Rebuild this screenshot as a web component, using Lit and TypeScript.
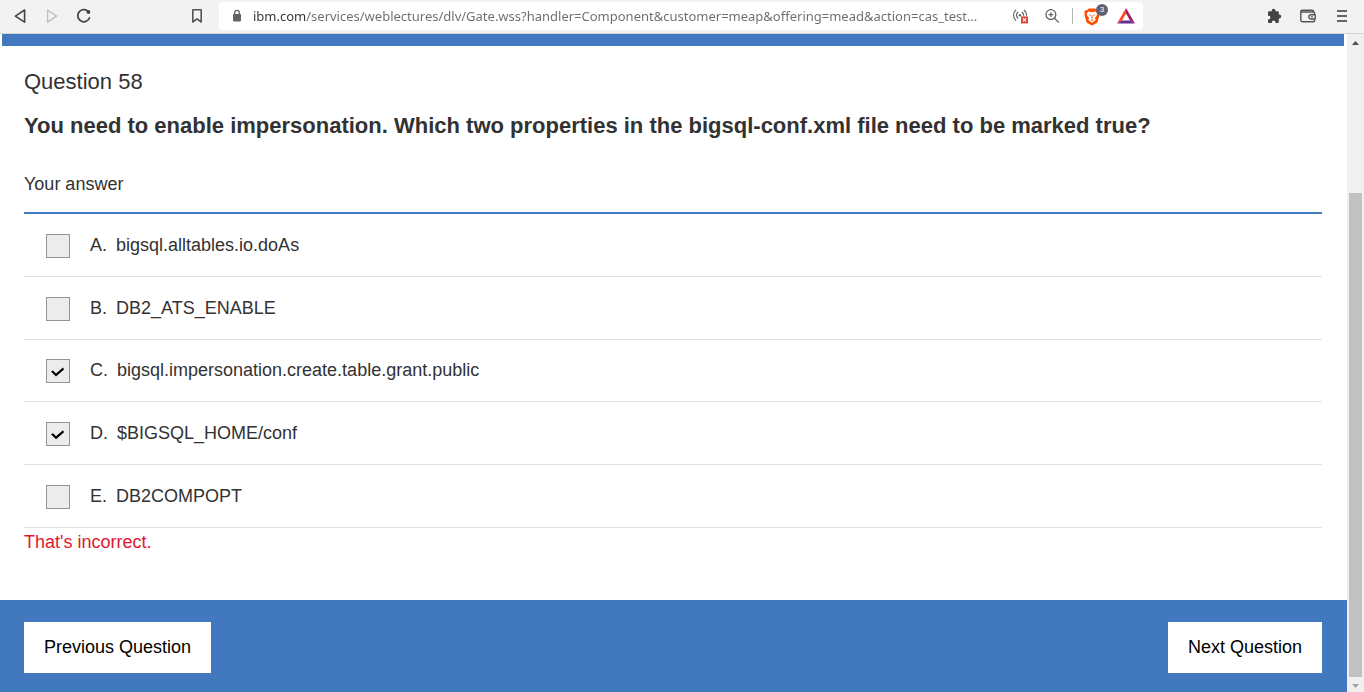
import { LitElement, html, css } from "lit";
import { customElement, state } from "lit/decorators.js";

interface Option {
  letter: string;
  text: string;
  checked: boolean;
}

@customElement("browser-bar")
class BrowserBar extends LitElement {
  static styles = css`
    :host {
      display: block;
      background: #f2f2f2;
      border-bottom: 1px solid #d5d5d5;
    }
    .bar {
      display: flex;
      align-items: center;
      height: 33px;
      box-sizing: border-box;
      padding: 0 12px 2px;
    }
    button {
      display: block;
      flex: none;
      border: 0;
      padding: 0;
      margin: 0;
      background: none;
      width: 16px;
      height: 16px;
    }
    svg {
      display: block;
      overflow: visible;
    }
    .nav {
      display: flex;
      gap: 16px;
      margin-right: 97px;
    }
    .address {
      display: flex;
      align-items: center;
      flex: 0 1 924px;
      min-width: 0;
      box-sizing: border-box;
      height: 28px;
      margin-left: 14px;
      padding: 0 10px 0 10px;
      background: #fff;
      border-radius: 4px;
    }
    .url {
      flex: 1;
      min-width: 0;
      border: 0;
      outline: 0;
      margin: 0 16px 0 8px;
      padding: 0;
      font: 13px/20px "Noto Sans", "Open Sans", sans-serif;
      color: transparent;
      background: linear-gradient(90deg, #303134 53px, #6b6c70 53px);
      -webkit-background-clip: text;
      background-clip: text;
    }
    .tools {
      display: flex;
      align-items: center;
      gap: 16px;
    }
    .divider {
      width: 1px;
      height: 16px;
      margin: 0 11px 0 12px;
      background: #b4b4b4;
    }
    .shields {
      position: relative;
      margin-right: 17px;
    }
    .badge {
      position: absolute;
      left: 12px;
      top: -4px;
      width: 12px;
      height: 12px;
      border-radius: 6px;
      background: #5f6170;
      color: #fff;
      font: 8px/12px "Liberation Sans", Arial, sans-serif;
      text-align: center;
    }
    .menu {
      display: flex;
      gap: 18px;
      margin-left: auto;
      margin-right: 2px;
    }
  `;

  render() {
    return html`
      <div class="bar">
        <div class="nav">
          <button aria-label="Back">
            <svg width="16" height="16" fill="none" stroke="#444" stroke-width="1.6" stroke-linejoin="round">
              <path d="M12.6 2v12.2L3.4 8.1z" />
            </svg>
          </button>
          <button aria-label="Forward">
            <svg width="16" height="16" fill="none" stroke="#bfbfbf" stroke-width="1.4" stroke-linejoin="round">
              <path d="M3.6 2v12.2l9-6.1z" />
            </svg>
          </button>
          <button aria-label="Reload">
            <svg width="16" height="16" fill="none" stroke="#444" stroke-width="1.7" stroke-linecap="round">
              <path d="M11.2 2.6A6.1 6.1 0 1 0 13.6 9.8" />
              <circle cx="12.4" cy="4" r="1.9" fill="#444" stroke="none" />
            </svg>
          </button>
        </div>
        <button aria-label="Bookmark">
          <svg width="16" height="16" fill="none" stroke="#555" stroke-width="1.6" stroke-linejoin="round">
            <path d="M3.8 1.8h8.4v12.2L8 10.9l-4.2 3.1z" />
          </svg>
        </button>
        <div class="address">
          <svg width="16" height="16" aria-hidden="true">
            <rect x="4" y="6" width="8" height="7.4" rx=".8" fill="#5f6368" />
            <path d="M5.7 6.4V4.7a2.3 2.3 0 0 1 4.6 0v1.7" fill="none" stroke="#5f6368" stroke-width="1.3" />
          </svg>
          <input
            class="url"
            type="text"
            aria-label="Address"
            .value=${"ibm.com/services/weblectures/dlv/Gate.wss?handler=Component&customer=meap&offering=mead&action=cas_test..."}
          />
          <div class="tools">
            <button aria-label="Autoplay blocked">
              <svg width="16" height="16" fill="none" stroke="#5f6368" stroke-width="1.2" stroke-linecap="round">
                <path d="M3.6 2.2a7.2 7.2 0 0 0 0 10M5.8 4.2a4.6 4.6 0 0 0 0 6M12.4 2.2a7.2 7.2 0 0 1 2.2 5M10.2 4.2a4.6 4.6 0 0 1 1.4 3" />
                <circle cx="8" cy="7.2" r="1.2" fill="#5f6368" stroke="none" />
                <rect x="9" y="8.4" width="7" height="7" fill="#db4437" stroke="none" />
                <path d="M11.2 10.6l2.6 2.6m0-2.6l-2.6 2.6" stroke="#fff" stroke-width="1.1" />
              </svg>
            </button>
            <button aria-label="Zoom">
              <svg width="16" height="16" fill="none" stroke="#5f6368" stroke-width="1.3">
                <circle cx="6.9" cy="6.6" r="4.9" />
                <path d="M10.3 10l4.6 4.6M4.5 6.6h4.8M6.9 4.2v4.8" />
              </svg>
            </button>
          </div>
          <div class="divider"></div>
          <button class="shields" aria-label="Shields">
            <svg width="16" height="18" viewBox="0 0 16 17">
              <path d="M4.6 0h6.8l1.5 1.7 1.6-.2 1.2 2-.5 1.4.4 1.2-1.8 6.8q-.3 1-1.4 1.8L8 17l-4.4-2.3q-1.1-.8-1.4-1.8L.4 6.1l.4-1.2-.5-1.4 1.2-2 1.6.2z" fill="#ff5000" />
              <path d="M4.3 3l1.7.4h4l1.7-.4 1.6 2.3-.8 2.2-1.6 2.1.8 1.8L8 14.2l-3.7-2.8.8-1.8-1.6-2.1-.8-2.2z" fill="#fff" />
              <path d="M4.4 5.8l2.4.6-.4 1zM11.6 5.8l-2.4.6.4 1zM7.7 6.5h.6l.4 3-.7.5-.7-.5zM6.6 11.4L8 10.8l1.4.6L8 12.5z" fill="#ff5000" />
            </svg>
            <span class="badge">3</span>
          </button>
          <button aria-label="Rewards">
            <svg width="18" height="16" viewBox="0 0 18 16">
              <path d="M9 0L0 15.5l5-3L9 5.5z" fill="#ff4724" />
              <path d="M9 0l9 15.5-5-3L9 5.5z" fill="#9e1f63" />
              <path d="M0 15.5h18l-5-3H5z" fill="#662d91" />
            </svg>
          </button>
        </div>
        <div class="menu">
          <button aria-label="Extensions">
            <svg width="16" height="16" fill="#444">
              <path d="M2 4.2q0-1 1-1h2.7V2.6a1.9 1.9 0 0 1 3.8 0v.6h2.3q1 0 1 1v2.4h.5a1.9 1.9 0 0 1 0 3.8h-.5V14q0 1-1 1H9.5v-.7a1.8 1.8 0 0 0-3.6 0v.7H3q-1 0-1-1v-2.6h.6a1.8 1.8 0 0 0 0-3.6H2z" />
            </svg>
          </button>
          <button aria-label="Wallet">
            <svg width="16" height="16" fill="none" stroke="#555" stroke-width="1.4" stroke-linejoin="round">
              <path d="M14.6 6V5.2q0-1.2-1.2-1.2H1M13.4 4V3.4q0-1.2-1.2-1.2H2.4Q.8 2.2.8 3.8v8q0 2 2 2h10q1.8 0 1.8-1.8v-.6" />
              <path d="M15.2 6.8H11a2 2 0 0 0 0 4.2h4.2z" />
              <path d="M11 8.9h1.8" />
            </svg>
          </button>
          <button aria-label="Menu">
            <svg width="16" height="16" fill="#666">
              <path d="M3 2h10v2H3zM3 7h10v2H3zM3 12h10v2H3z" />
            </svg>
          </button>
        </div>
      </div>
    `;
  }
}

@customElement("page-scrollbar")
class PageScrollbar extends LitElement {
  static styles = css`
    :host {
      display: flex;
      flex-direction: column;
      align-items: center;
      width: 17px;
      background: #f0f0f0;
    }
    svg {
      display: block;
      flex: none;
    }
    .track {
      flex: 1;
      display: flex;
      flex-direction: column;
      align-self: stretch;
      padding: 0 2px;
    }
    .before {
      flex: 142;
    }
    .thumb {
      flex: 484;
      background: #c1c1c1;
    }
  `;

  render() {
    return html`
      <svg width="17" height="17"><path d="M5 11l3.5-4 3.5 4z" fill="#505050" /></svg>
      <div class="track">
        <div class="before"></div>
        <div class="thumb"></div>
      </div>
      <svg width="17" height="15"><path d="M5 7l3.5 4L12 7z" fill="#a3a3a3" /></svg>
    `;
  }
}

@customElement("app-root")
class AppRoot extends LitElement {
  static styles = css`
    :host {
      display: flex;
      flex-direction: column;
      min-height: 100vh;
      background: #fff;
      color: #323232;
      font: 18px/24px "Liberation Sans", Arial, sans-serif;
    }
    .view {
      flex: 1;
      display: flex;
    }
    .page {
      flex: 1;
      min-width: 0;
      display: flex;
      flex-direction: column;
    }
    .strip {
      height: 12px;
      margin: 0 3px 0 2px;
      background: #4178be;
    }
    main {
      flex: 1;
      padding: 20px 25px 44px 24px;
    }
    h1,
    h2,
    p {
      margin: 0;
      font-size: 22px;
      line-height: 32px;
      font-weight: 400;
    }
    h2 {
      margin-top: 12px;
      font-weight: 700;
    }
    fieldset {
      border: 0;
      margin: 30px 0 0;
      padding: 0;
      min-width: 0;
    }
    legend {
      padding: 0;
      margin-bottom: 16px;
    }
    .options {
      display: grid;
      grid-auto-rows: 1fr;
      min-height: 314px;
      border-top: 2px solid #4178be;
    }
    .option {
      display: flex;
      align-items: center;
      border-bottom: 1px solid #dfdfdf;
      padding: 0 22px;
    }
    .box {
      appearance: none;
      flex: none;
      display: grid;
      place-items: center;
      width: 24px;
      height: 24px;
      box-sizing: border-box;
      margin: 2px 20px 0 0;
      border: 1px solid #959595;
      background: #ececec;
    }
    .box:checked::before {
      content: "";
      width: 14px;
      height: 12px;
      background: #000;
      clip-path: polygon(0 6px, 2px 5px, 5px 8px, 12px 2px, 13px 4px, 5px 11px);
    }
    .letter {
      margin-right: 9px;
    }
    .result {
      font-size: 18px;
      line-height: 24px;
      margin-top: 2px;
      color: #e0182d;
    }
    footer {
      display: flex;
      justify-content: space-between;
      padding: 22px 25px 19px 24px;
      background: #4178be;
    }
    .step {
      border: 0;
      padding: 13px 20px 14px;
      background: #fff;
      color: #000;
      font: inherit;
    }
  `;

  @state() private options: Option[] = [
    { letter: "A.", text: "bigsql.alltables.io.doAs", checked: false },
    { letter: "B.", text: "DB2_ATS_ENABLE", checked: false },
    { letter: "C.", text: "bigsql.impersonation.create.table.grant.public", checked: true },
    { letter: "D.", text: "$BIGSQL_HOME/conf", checked: true },
    { letter: "E.", text: "DB2COMPOPT", checked: false },
  ];

  render() {
    return html`
      <browser-bar></browser-bar>
      <div class="view">
        <div class="page">
          <div class="strip"></div>
          <main>
            <h1>Question 58</h1>
            <h2>You need to enable impersonation. Which two properties in the bigsql-conf.xml file need to be marked true?</h2>
            <fieldset>
              <legend>Your answer</legend>
              <div class="options">
                ${this.options.map(
                  (o) => html`
                    <label class="option">
                      <input class="box" type="checkbox" .checked=${o.checked} />
                      <span class="letter">${o.letter}</span>
                      <span>${o.text}</span>
                    </label>
                  `
                )}
              </div>
            </fieldset>
            <p class="result">That's incorrect.</p>
          </main>
          <footer>
            <button class="step">Previous Question</button>
            <button class="step">Next Question</button>
          </footer>
        </div>
        <page-scrollbar></page-scrollbar>
      </div>
    `;
  }
}
